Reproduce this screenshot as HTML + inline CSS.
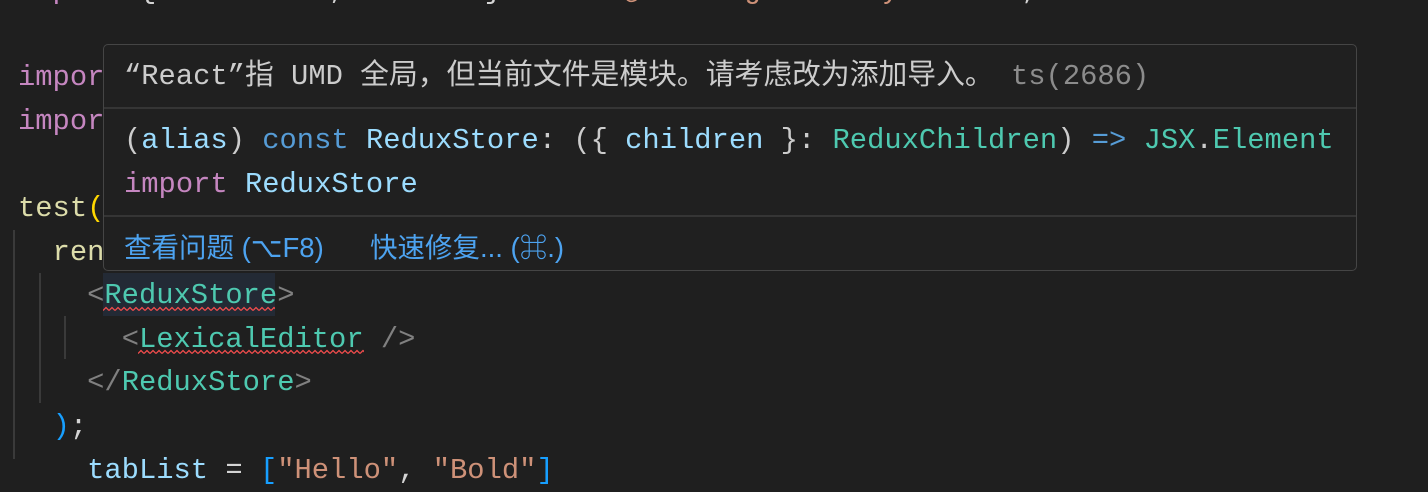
<!DOCTYPE html>
<html><head><meta charset="utf-8"><style>
html,body{margin:0;padding:0;background:#1f1f1f;width:1428px;height:459px;overflow:hidden}
.code{position:absolute;left:18px;top:-31px;font-family:"Liberation Mono","Noto Sans CJK SC",monospace;font-size:28.8px;line-height:43.6px;color:#d4d4d4;white-space:pre}
.k{color:#c586c0}.f{color:#dcdcaa}.y{color:#ffd700}.t{color:#4ec9b0}.g{color:#808080}.b{color:#179fff}.s{color:#ce9178}.v{color:#9cdcfe}.c{color:#569cd6}
.guide{position:absolute;width:2px;background:#3a3a3a}
.sq{position:absolute;height:6px}
.tip{position:absolute;left:103px;top:44px;width:1252px;height:225px;background:#202020;border:1px solid #454545;border-radius:5px;font-family:"Liberation Mono","Noto Sans CJK SC",monospace;font-size:28.8px;color:#cccccc;white-space:pre;overflow:hidden}
.row{position:absolute;left:20px}
.sep{position:absolute;left:0;right:0;height:2px;background:#353535}
.links{position:absolute;left:20px;top:180px;font-family:"Liberation Sans","Noto Sans CJK SC",sans-serif;font-size:27.5px;color:#4da3f0}
</style></head><body>
<div class="guide" style="left:13px;top:230px;height:229px"></div>
<div class="guide" style="left:39px;top:273px;height:130px"></div>
<div class="guide" style="left:64px;top:316px;height:43px"></div>
<div style="position:absolute;left:103px;top:273px;width:172px;height:43px;background:#232a35"></div>
<div class="code"><span class="k">import</span> { <span class="v">fireEvent</span>, <span class="v">render</span> } <span class="k">from</span> <span class="s">"@testing-library/react"</span>;

<span class="k">import</span> <span class="v">React</span>
<span class="k">import</span> <span class="v">ReduxStore</span>

<span class="f">test</span><span class="y">(</span>
  <span class="f">render</span>(
    <span class="g">&lt;</span><span class="t">ReduxStore</span><span class="g">&gt;</span>
      <span class="g">&lt;</span><span class="t">LexicalEditor</span> <span class="g">/&gt;</span>
    <span class="g">&lt;/</span><span class="t">ReduxStore</span><span class="g">&gt;</span>
  <span class="b">)</span>;
    <span class="v">tabList</span> = <span class="b">[</span><span class="s">"Hello"</span>, <span class="s">"Bold"</span><span class="b">]</span></div>
<svg class="sq" style="left:103px;top:306px;width:172px" width="172" height="6"><defs><pattern id="w" width="6" height="6" patternUnits="userSpaceOnUse"><path d="M0 4.5L3 1.5L6 4.5" fill="none" stroke="#f14c4c" stroke-width="1.3"/></pattern></defs><rect width="172" height="6" fill="url(#w)"/></svg>
<svg class="sq" style="left:138px;top:349px;width:226px" width="226" height="6"><rect width="226" height="6" fill="url(#w)"/></svg>
<div class="tip">
<div class="row" style="top:10px;line-height:43px">“React”指 UMD 全局，但当前文件是模块。请考虑改为添加导入。 <span style="color:#8c8c8c">ts(2686)</span></div>
<div class="sep" style="top:62px"></div>
<div class="row" style="top:74px;line-height:44px"><span>(</span><span class="v">alias</span>) <span class="c">const</span> <span class="v">ReduxStore</span>: ({ <span class="v">children</span> }: <span class="t">ReduxChildren</span>) <span class="c">=&gt;</span> <span class="t">JSX</span>.<span class="t">Element</span>
<span class="k">import</span> <span class="v">ReduxStore</span></div>
<div class="sep" style="top:170px"></div>
<div class="links"><span style="display:inline-block;width:246px;white-space:nowrap">查看问题 (⌥F8)</span>快速修复... (⌘.)</div>
</div>
</body></html>
